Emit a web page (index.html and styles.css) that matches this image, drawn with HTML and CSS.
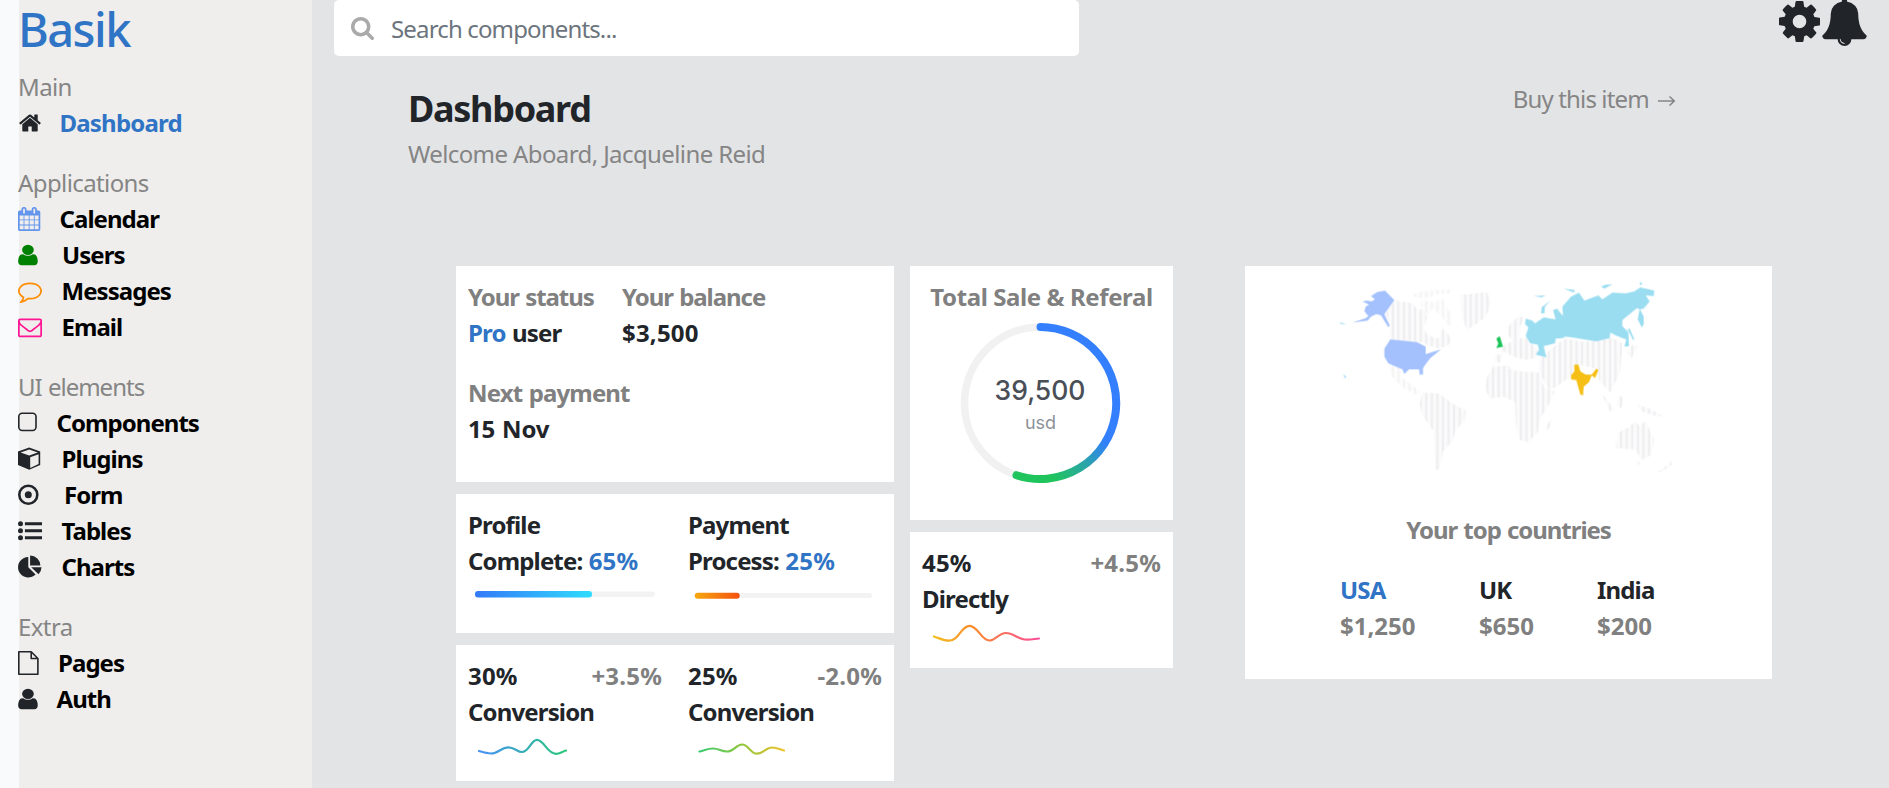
FILE: index.html
```html
<!DOCTYPE html>
<html lang="en">
<head>
<meta charset="utf-8">
<title>Basik Dashboard</title>
<link rel="stylesheet" href="styles.css">
</head>
<body>
<aside class="sidebar">
  <h1 class="brand">Basik</h1>
  <nav class="group">
    <p class="group-title">Main</p>
    <a class="item active"><svg class="icon" viewBox="0 0 1792 1792"><path d="M1472 992v480q0 26-19 45t-45 19h-384v-384h-256v384h-384q-26 0-45-19t-19-45v-480q0-1 .5-3t.5-3l575-474 575 474q1 2 1 6zm223-69l-62 74q-8 9-21 11h-3q-13 0-21-7l-692-577-692 577q-12 8-24 7-13-2-21-11l-62-74q-8-10-7-23.5t11-21.5l719-599q32-26 76-26t76 26l244 204v-195q0-14 9-23t23-9h192q14 0 23 9t9 23v408l219 182q10 8 11 21.5t-7 23.5z"/></svg><span class="label">Dashboard</span></a>
  </nav>
  <nav class="group">
    <p class="group-title">Applications</p>
    <a class="item"><svg class="icon calendar" viewBox="64 0 1792 1792"><path d="M192 1664h288v-288h-288v288zm352 0h320v-288h-320v288zm-352-352h288v-320h-288v320zm352 0h320v-320h-320v320zm-352-384h288v-288h-288v288zm736 736h320v-288h-320v288zm-384-736h320v-288h-320v288zm768 736h288v-288h-288v288zm-384-352h320v-320h-320v320zm-352-864v-288q0-13-9.5-22.5t-22.5-9.5h-64q-13 0-22.5 9.5t-9.5 22.5v288q0 13 9.5 22.5t22.5 9.5h64q13 0 22.5-9.5t9.5-22.5zm736 864h288v-320h-288v320zm-384-384h320v-288h-320v288zm384 0h288v-288h-288v288zm32-480v-288q0-13-9.5-22.5t-22.5-9.5h-64q-13 0-22.5 9.5t-9.5 22.5v288q0 13 9.5 22.5t22.5 9.5h64q13 0 22.5-9.5t9.5-22.5zm384-64v1280q0 52-38 90t-90 38h-1408q-52 0-90-38t-38-90v-1280q0-52 38-90t90-38h128v-96q0-66 47-113t113-47h64q66 0 113 47t47 113v96h384v-96q0-66 47-113t113-47h64q66 0 113 47t47 113v96h128q52 0 90 38t38 90z"/></svg><span class="label">Calendar</span></a>
    <a class="item wide"><svg class="icon green" viewBox="245 0 1570 1792" preserveAspectRatio="none"><path d="M1536 1399q0 109-62.5 187t-150.5 78h-854q-88 0-150.5-78t-62.5-187q0-85 8.5-160.5t31.5-152 58.5-131 94-89 134.5-34.5q131 128 313 128t313-128q76 0 134.5 34.5t94 89 58.5 131 31.5 152 8.5 160.5zm-256-887q0 159-112.5 271.5t-271.5 112.5-271.5-112.5-112.5-271.5 112.5-271.5 271.5-112.5 271.5 112.5 112.5 271.5z"/></svg><span class="label">Users</span></a>
    <a class="item"><svg class="icon orange" viewBox="0 0 1792 1792"><path d="M896 384q-204 0-381.5 69.5t-282 187.5-104.5 255q0 112 71.5 213.5t201.5 175.5l87 50-27 96q-24 91-70 172 152-63 275-171l43-38 57 6q69 8 130 8 204 0 381.5-69.5t282-187.5 104.5-255-104.5-255-282-187.5-381.5-69.5zm896 512q0 174-120 321.5t-326 233-450 85.5q-70 0-145-8-198 175-460 242-49 14-114 22h-5q-15 0-27-10.5t-16-27.5v-1q-3-4-.5-12t2-10 4.5-9.5l6-9 7-8.5 8-9q7-8 31-34.5t34.5-38 31-39.5 32.5-51 27-59 26-76q-157-89-247.5-220t-90.5-281q0-174 120-321.5t326-233 450-85.5 450 85.5 326 233 120 321.5z"/></svg><span class="label mid">Messages</span></a>
    <a class="item"><svg class="icon pink" viewBox="0 0 1792 1792"><path d="M1664 1504v-768q-32 36-69 66-268 206-426 338-51 43-83 67t-86.5 48.5-102.5 24.5h-2q-48 0-102.5-24.5t-86.5-48.5-83-67q-158-132-426-338-37-30-69-66v768q0 13 9.5 22.5t22.5 9.5h1472q13 0 22.5-9.5t9.5-22.5zm0-1051v-24.5l-.5-13-3-12.5-5.5-9-9-7.5-14-2.5h-1472q-13 0-22.5 9.5t-9.5 22.5q0 168 147 284 193 152 401 317 6 5 35 29.5t46 37.5 44.5 31.5 50.5 27.5 43 9h2q20 0 43-9t50.5-27.5 44.5-31.5 46-37.5 35-29.5q208-165 401-317 54-43 100.5-115.5t46.5-131.5zm128-37v1088q0 66-47 113t-113 47h-1472q-66 0-113-47t-47-113v-1088q0-66 47-113t113-47h1472q66 0 113 47t47 113z"/></svg><span class="label mid">Email</span></a>
  </nav>
  <nav class="group">
    <p class="group-title tight">UI elements</p>
    <a class="item"><svg class="icon" viewBox="0 0 24 24"><rect x=".8" y="2.300" width="17.2" height="17.2" rx="3.4" fill="none" stroke="currentColor" stroke-width="1.6"/></svg><span class="label near">Components</span></a>
    <a class="item"><svg class="icon" viewBox="0 0 24 24"><path d="M11.2.6 22.2 4.600v13.5L11.2 22.800 0 18.100V4.600Z"/><path class="cut" d="M11.2 2.4 19.8 5.5 11.2 8.600 2.600 5.500ZM12.200 10.300 20.600 7.200v9.900l-8.400 3.900Z"/></svg><span class="label mid">Plugins</span></a>
    <a class="item"><svg class="icon" viewBox="0 0 24 24"><circle cx="10.300" cy="11.700" r="9" fill="none" stroke="currentColor" stroke-width="2.600"/><circle cx="10.300" cy="11.700" r="3.500"/></svg><span class="label far">Form</span></a>
    <a class="item"><svg class="icon" viewBox="0 0 24 24"><circle cx="2.500" cy="4.700" r="2.500"/><circle cx="2.500" cy="11.700" r="2.500"/><circle cx="2.500" cy="18.700" r="2.500"/><path d="M6.900 3.200h17.100v3H6.900zM6.900 10.200h17.100v3H6.900zM6.900 17.200h17.100v3H6.900z"/></svg><span class="label mid">Tables</span></a>
    <a class="item"><svg class="icon" viewBox="0 0 24 24"><path d="M10.300 1.900V12.200l7.300 7.300A10.300 10.300 0 1 1 10.300 1.900ZM12.100.4a10.300 10.300 0 0 1 10.300 10.200H12.100ZM13.200 12.200h10.300a10.300 10.300 0 0 1-3 7.100Z"/></svg><span class="label mid">Charts</span></a>
  </nav>
  <nav class="group">
    <p class="group-title">Extra</p>
    <a class="item"><svg class="icon" viewBox="0 0 24 24"><path d="M.8.8H13.200L19.900 7.500V23.200H.8ZM13.200.8V7.500H19.900" fill="none" stroke="currentColor" stroke-width="1.600" stroke-linejoin="round"/></svg><span class="label page">Pages</span></a>
    <a class="item"><svg class="icon" viewBox="245 0 1570 1792" preserveAspectRatio="none"><path d="M1536 1399q0 109-62.5 187t-150.500 78h-854q-88 0-150.500-78t-62.500-187q0-85 8.500-160.500t31.500-152 58.500-131 94-89 134.500-34.500q131 128 313 128t313-128q76 0 134.500 34.500t94 89 58.500 131 31.500 152 8.500 160.500zm-256-887q0 159-112.500 271.500t-271.500 112.500-271.500-112.500-112.500-271.500 112.500-271.500 271.500-112.500 271.500 112.500 112.500 271.500z"/></svg><span class="label near">Auth</span></a>
  </nav>
</aside>
<main class="main">
  <header class="topbar">
    <div class="search">
      <svg class="search-icon" viewBox="64 128 1664 1664"><path d="M1216 832q0-185-131.500-316.500t-316.500-131.500-316.500 131.500-131.500 316.500 131.500 316.500 316.500 131.500 316.500-131.500 131.500-316.500zm512 832q0 52-38 90t-90 38q-54 0-90-38l-343-342q-179 124-399 124-143 0-273.500-55.500t-225-150-150-225-55.500-273.500 55.500-273.500 150-225 225-150 273.500-55.500 273.500 55.500 225 150 150 225 55.500 273.500q0 220-124 399l343 343q37 37 37 90z"/></svg>
      <span class="search-text">Search components...</span>
    </div>
    <div class="actions">
      <svg class="gear" viewBox="128 128 1536 1536"><path d="M1152 896q0-106-75-181t-181-75-181 75-75 181 75 181 181 75 181-75 75-181zm512-109v222q0 12-8 23t-20 13l-185 28q-19 54-39 91 35 50 107 138 10 12 10 25t-9 23q-27 37-99 108t-94 71q-12 0-26-9l-138-108q-44 23-91 38-16 136-29 186-7 28-36 28h-222q-14 0-24.500-8.500t-11.500-21.500l-28-184q-49-16-90-37l-141 107q-10 9-25 9-14 0-25-11-126-114-165-168-7-10-7-23 0-12 8-23 15-21 51-66.500t54-70.500q-27-50-41-99l-183-27q-13-2-21-12.500t-8-23.500v-222q0-12 8-23t19-13l186-28q14-46 39-92-40-57-107-138-10-12-10-24 0-10 9-23 26-36 98.500-107.500t94.500-71.500q13 0 26 10l138 107q44-23 91-38 16-136 29-186 7-28 36-28h222q14 0 24.500 8.500t11.500 21.500l28 184q49 16 90 37l142-107q9-9 24-9 13 0 25 10 129 119 165 170 7 8 7 22 0 12-8 23-15 21-51 66.500t-54 70.500q26 50 41 98l183 28q13 2 21 12.500t8 23.500z"/></svg>
      <svg class="bell" viewBox="64 0 1664 1792"><path d="M912 1696q0-16-16-16-59 0-101.500-42.500t-42.500-101.500q0-16-16-16t-16 16q0 73 51.500 124.500t124.500 51.500q16 0 16-16zm816-288q0 52-38 90t-90 38h-448q0 106-75 181t-181 75-181-75-75-181h-448q-52 0-90-38t-38-90q50-42 91-88t85-119.500 74.500-158.500 50-206 19.500-260q0-152 117-282.500t307-158.500q-8-19-8-39 0-40 28-68t68-28 68 28 28 68q0 20-8 39 190 28 307 158.500t117 282.500q0 139 19.500 260t50 206 74.500 158.500 85 119.500 91 88z"/></svg>
    </div>
  </header>
  <section class="heading">
    <div>
      <h2 class="title">Dashboard</h2>
      <p class="welcome">Welcome Aboard, Jacqueline Reid</p>
    </div>
    <p class="buy">Buy this item <svg class="arrow" viewBox="0 0 18 12"><path d="M0 6H16M11.500 1.500 16.300 6 11.500 10.500" fill="none" stroke="currentColor" stroke-width="1.500"/></svg></p>
  </section>
  <section class="cards">
    <div class="col left">
      <article class="card status">
        <div class="pair"><div class="status-cell"><p class="muted snug">Your status</p><p><span class="blue">Pro</span> user</p></div><div><p class="muted snug">Your balance</p><p class="num">$3,500</p></div></div>
        <div><p class="muted">Next payment</p><p class="date">15 Nov</p></div>
      </article>
      <article class="card progress">
        <div class="half"><p>Profile</p><p>Complete: <span class="blue num">65%</span></p>
          <svg class="bar" viewBox="0 0 194 16"><defs><linearGradient id="g1"><stop offset="0" stop-color="#3379f8"/><stop offset="1" stop-color="#2fdcfd"/></linearGradient></defs><rect x="7" y="5.500" width="180" height="5.500" rx="2.700" fill="#f3f3f4"/><rect x="7" y="5" width="117" height="6.500" rx="3" fill="url(#g1)"/></svg></div>
        <div class="half"><p>Payment</p><p>Process: <span class="blue num">25%</span></p>
          <svg class="bar" viewBox="0 0 194 16"><defs><linearGradient id="g2"><stop offset="0" stop-color="#f5a80e"/><stop offset="1" stop-color="#f6500f"/></linearGradient></defs><rect x="7" y="7" width="177" height="5" rx="2.500" fill="#f3f3f4"/><rect x="6.700" y="6.700" width="45" height="6" rx="3" fill="url(#g2)"/></svg></div>
      </article>
      <article class="card trend">
        <div class="half"><p class="row"><span class="num">30%</span><span class="muted num">+3.5%</span></p><p>Conversion</p>
          <svg class="spark" viewBox="456 730 120 34"><defs><linearGradient id="g3"><stop offset="0" stop-color="#4791f7"/><stop offset="1" stop-color="#27c77b"/></linearGradient></defs><path d="M479 751C484 752.500 487 753.500 491 753.500C499 753.500 501 747.300 508 747.300C515 747.300 517 752 522 752C529 752 531 739.800 537 739.800C544 739.800 547 753.800 556 753.800C560 753.800 562 751.500 566 750.500" stroke="url(#g3)"/></svg></div>
        <div class="half"><p class="row"><span class="num">25%</span><span class="muted num">-2.0%</span></p><p>Conversion</p>
          <svg class="spark" viewBox="676 730 120 34"><defs><linearGradient id="g4"><stop offset="0" stop-color="#3ccb72"/><stop offset=".5" stop-color="#8fc63d"/><stop offset="1" stop-color="#efc32b"/></linearGradient></defs><path d="M699.500 751.500C705 750.500 707 748.500 713 748.500C719 748.500 721 751.500 727 751.500C734 751.500 736 744.500 742 744.500C749 744.500 750 753.700 757 753.700C763 753.700 766 747.500 772 747.500C777 747.500 780 749.500 784 750.500" stroke="url(#g4)"/></svg></div>
      </article>
    </div>
    <div class="col middle">
      <article class="card sale">
        <p class="muted sale-title">Total Sale &amp; Referal</p>
        <svg class="ring" viewBox="0 0 180 172">
          <defs><linearGradient id="g5" gradientUnits="userSpaceOnUse" x1="150" y1="120" x2="100" y2="160"><stop offset="0" stop-color="#337ffd"/><stop offset=".45" stop-color="#2aa3ac"/><stop offset="1" stop-color="#1fc45c"/></linearGradient></defs>
          <circle cx="90.500" cy="89" r="76" fill="none" stroke="#f1f1f2" stroke-width="7.500"/>
          <path d="M90.500 13A76 76 0 1 1 66.500 161.200" fill="none" stroke="url(#g5)" stroke-width="8" stroke-linecap="round"/>
          <text class="ring-value" x="90" y="85.500">39,500</text>
          <text class="ring-unit" x="90.500" y="115">usd</text>
        </svg>
      </article>
      <article class="card trend direct">
        <div><p class="row"><span class="num">45%</span><span class="muted num">+4.5%</span></p><p>Directly</p>
          <svg class="spark" viewBox="909 617 120 34"><defs><linearGradient id="g6"><stop offset="0" stop-color="#f4bf20"/><stop offset=".38" stop-color="#f98a2c"/><stop offset="1" stop-color="#f94e9a"/></linearGradient></defs><path d="M933 636.500C939 638.500 943 640.700 948 640.700C958 640.700 960 625.800 968.500 625.800C977 625.800 980 640.500 988.500 640.500C994 640.500 998 633 1005 633C1013 633 1017 639.700 1026 639.700C1031 639.700 1034 638.800 1038 638.500" stroke="url(#g6)"/></svg></div>
      </article>
    </div>
    <article class="card countries">
      <svg class="map" viewBox="0 0 1035 606">
        <defs><pattern id="lines" width="16.700" height="20" patternUnits="userSpaceOnUse"><rect width="16.700" height="20" fill="#fbfbfc"/><rect width="5" height="20" x="4" fill="#ebebee"/></pattern>
        <filter id="soft"><feGaussianBlur stdDeviation="1.600"/></filter></defs>
        <g filter="url(#soft)">
        <g fill="url(#lines)">
          <path d="M176 66 232 76 250 96 268 92 276 120 266 150 278 172 310 182 322 150 340 168 350 190 336 204 312 212 280 202 262 194 166 184 164 134 152 108Z"/>
          <path d="M232 50 262 40 300 36 352 34 344 46 300 50 286 58 246 62ZM262 66 300 72 322 60 336 90 352 110 350 148 334 138 318 112 292 92 280 112 256 84Z" opacity=".6"/>
          <path d="M376 52 456 42 468 74 452 118 396 156 382 120Z"/>
          <path d="M160 260 200 264 196 296 238 326 258 342 244 350 200 326 170 296Z" opacity=".7"/>
          <path d="M262 344 312 346 346 372 392 398 388 430 362 456 352 490 324 520 314 576 300 574 296 460 262 412 254 380Z"/>
          <path d="M474 266 520 262 526 274 560 280 612 284 628 330 660 340 636 390 614 424 610 460 580 492 554 486 542 440 540 372 506 356 464 362 450 330 456 298Z"/>
          <path d="M500 206 516 196 532 190 516 164 522 142 548 116 568 118 556 146 552 180 574 180 610 220 600 240 572 246 540 238 504 220 498 256 480 250 480 232 500 226Z"/>
          <path d="M612 246 664 198 690 182 750 192 830 178 862 196 856 280 826 344 792 308 788 274 734 260 712 290 668 324 642 336 612 284Z"/>
          <path d="M848 464 884 446 900 430 914 444 930 428 958 484 950 530 920 546 900 514 842 510Z"/>
          <path d="M800 346 826 378 838 400 822 398ZM850 350 866 360 858 392 846 382ZM906 380 950 394 982 414 960 414 920 400ZM632 444 652 420 646 444 634 462ZM966 584 1004 556 1008 546 1010 560 982 580ZM908 550 918 556 910 564ZM876 226 890 200 908 204 890 240Z"/>
        </g>
        <path fill="#a4c1fd" d="M150 38 178 66 148 108 164 142 160 148 138 112 124 108 108 116 98 128 52 134 92 120 100 114 88 100 92 86 102 80 82 70 96 68 110 70 120 64 108 54 126 42ZM166 184 246 192 272 206 272 228 318 214 286 240 272 258 264 270 264 290 254 290 252 274 222 274 208 288 202 274 160 256 148 236 148 212Z"/>
        <path fill="#a9dcf6" d="M24 288 34 296 30 302ZM14 132 34 138 18 138Z"/>
        <path fill="#9addf1" d="M572 122 592 128 600 136 588 144 626 118 662 124 654 96 666 92 684 114 682 86 708 56 732 44 748 68 790 52 802 64 832 44 872 46 898 40 916 28 958 38 956 54 932 52 944 70 926 92 914 94 906 90 862 126 862 144 880 162 882 204 868 206 874 184 862 180 842 172 826 164 824 180 784 190 710 178 690 176 684 180 662 182 660 196 626 204 634 238 602 230 612 216 608 200 586 196 572 174 580 148 570 138ZM914 92 926 116 926 140 920 148 908 124ZM686 32 720 36 716 44ZM798 26 812 20 832 20 808 32ZM916 10 922 18 914 22ZM596 54 632 52 620 58ZM618 106 620 88 646 68 630 86 628 106ZM884 152 898 184 894 186 878 154Z"/>
        <path fill="#1ac458" d="M484 182 494 174 504 206 484 210 490 196Z"/>
        <path fill="#f5bf12" d="M718 260 730 260 736 280 752 290 770 290 784 272 790 276 780 300 770 292 762 312 746 326 744 352 736 350 724 306 708 304 708 292 718 280Z"/>
        </g>
      </svg>
      <p class="muted snug top-title">Your top countries</p>
      <div class="country-row"><div class="usa"><p class="blue">USA</p><p class="muted price">$1,250</p></div><div class="uk"><p>UK</p><p class="muted price">$650</p></div><div><p>India</p><p class="muted price">$200</p></div></div>
    </article>
  </section>
</main>
</body>
</html>
```
FILE: styles.css
```css
* { box-sizing: border-box; }
body {
  margin: 0;
  height: 788px;
  display: flex;
  overflow: hidden;
  background: #f8fafc;
  color: #212529;
  font: 400 24px/36px "Noto Sans", sans-serif;
}
h1, h2, p { margin: 0; }
svg { display: block; flex: none; fill: currentColor; }

.sidebar {
  width: 293px;
  margin-left: 19px;
  background: #efeeec;
}
.brand {
  height: 69px;
  padding-top: 1px;
  color: #2f74c5;
  font-size: 47px;
  font-weight: 540;
  line-height: 57px;
  letter-spacing: -1.5px;
  margin-left: -1px;
}
.group { margin-bottom: 24px; }
.group-title { margin-left: -1px; color: #858585; letter-spacing: -.6px; }
.group-title.tight { letter-spacing: -1px; word-spacing: 1px; }
.item {
  display: flex;
  align-items: center;
  height: 36px;
  color: #212529;
}
.icon { width: 24px; height: 24px; margin-left: -1px; overflow: visible; }
.cut { fill: #efeeec; }
.green { color: #008000; }
.calendar { color: #6495ed; }
.orange { color: #ff8c00; }
.pink { color: #ff1493; }
.label {
  margin-left: 17.500px;
  color: #000;
  font-weight: 660;
  letter-spacing: -.95px;
}
.active .label { color: #2f74c5; letter-spacing: -.8px; }
.wide .label { margin-left: 20px; }
.label.mid { margin-left: 19.500px; }
.label.near { margin-left: 14.500px; }
.label.far { margin-left: 22px; }
.label.page { margin-left: 16px; }

.main { flex: 1; background: #e3e4e6; }
.topbar {
  display: flex;
  justify-content: space-between;
  height: 56px;
  padding: 0 22px;
}
.search {
  display: flex;
  align-items: center;
  width: 745px;
  padding: 0 17px;
  background: #fff;
  border-radius: 5px;
}
.search-icon { width: 23px; height: 23px; color: #aaa; }
.search-text { margin: 2px 0 0 17px; color: #6c757d; letter-spacing: -.85px; }
.actions { display: flex; gap: 2px; }
.gear { width: 41px; height: 41px; margin-top: 1px; }
.bell { width: 45px; height: 48px; margin-top: -2px; }

.heading {
  display: flex;
  justify-content: space-between;
  height: 210px;
  padding: 24px 213px 0 96px;
}
.title { margin-top: 2px; font-size: 36px; font-weight: 670; line-height: 54px; letter-spacing: -1.3px; }
.welcome { color: #858585; letter-spacing: -.6px; }
.buy {
  display: flex;
  align-items: center;
  gap: 9px;
  height: 36px;
  margin-top: 1px;
  color: #858585;
  letter-spacing: -.8px;
  word-spacing: -.2px;
}
.arrow { width: 18px; height: 12px; margin-top: 3px; }

.cards {
  display: flex;
  align-items: flex-start;
  padding-left: 144px;
  font-weight: 660;
  letter-spacing: -.85px;
  word-spacing: 1px;
}
.col { display: flex; flex-direction: column; gap: 12px; }
.left { width: 438px; margin-right: 16px; }
.middle { width: 263px; margin-right: 72px; }
.card { padding: 13px 12px 0; background: #fff; }
.muted { color: #808080; }
.blue { color: #2f74c5; }
.num { letter-spacing: .2px; }
.price { letter-spacing: 0; }
.snug { letter-spacing: -1.05px; }
.date { letter-spacing: -.2px; }
.status { height: 216px; }
.pair { display: flex; margin-bottom: 24px; }
.status-cell { width: 154px; }
.progress { display: flex; gap: 26px; height: 139px; }
.half { width: 194px; }
.bar { width: 194px; height: 16px; margin-top: 6.500px; }
.trend { display: flex; gap: 26px; height: 136px; }
.row { display: flex; justify-content: space-between; }
.spark {
  width: 120px;
  height: 34px;
  margin-left: -12px;
  overflow: visible;
  fill: none;
  stroke-width: 2.2;
  stroke-linecap: round;
}
.sale { height: 254px; }
.sale-title { text-align: center; letter-spacing: -.4px; word-spacing: 0; }
.ring { width: 180px; height: 172px; margin: -1px 0 0 28px; }
.ring-value, .ring-unit { font-family: Inter, sans-serif; text-anchor: middle; letter-spacing: 0; word-spacing: 0; }
.ring-value { font-size: 26.500px; font-weight: 450; fill: #4a4f57; }
.ring-unit { font-size: 18px; font-weight: 400; fill: #8d9199; }
.direct > div { width: 239px; }
.countries { width: 527px; height: 413px; }
.map { width: 345px; height: 202px; margin: -1px 0 0 78px; }
.top-title { margin-top: 32px; text-align: center; }
.country-row { display: flex; padding: 24px 0 0 83px; }
.usa { width: 139px; }
.uk { width: 118px; }
```
